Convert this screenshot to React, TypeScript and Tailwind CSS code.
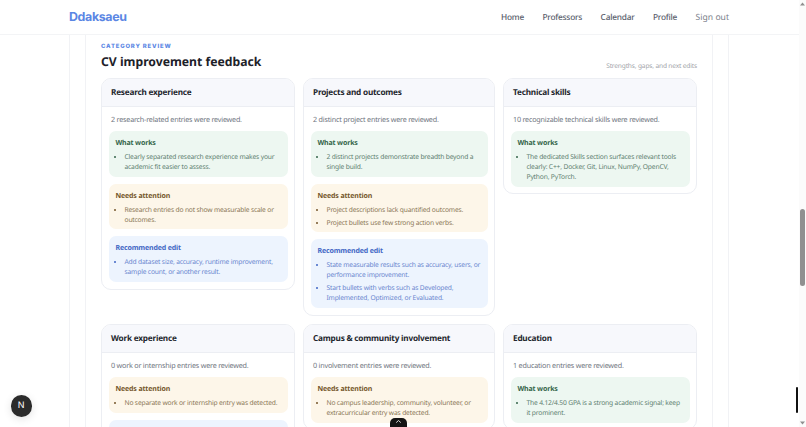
import React from "react";

type Kind = "good" | "warn" | "edit";
const styles: Record<Kind, { box: string; title: string; item: string; marker: string; label: string }> = {
  good: { box: "bg-[#edf7f1]", title: "text-[#35654a]", item: "text-[#5d8070]", marker: "marker:text-[#35654a]", label: "What works" },
  warn: { box: "bg-[#fdf6e9]", title: "text-[#74562b]", item: "text-[#8b7656]", marker: "marker:text-[#74562b]", label: "Needs attention" },
  edit: { box: "bg-[#edf4fe]", title: "text-[#3f66c4]", item: "text-[#6a86cf]", marker: "marker:text-[#3f66c4]", label: "Recommended edit" },
};

function Box({ kind, items }: { kind: Kind; items: string[] }) {
  const s = styles[kind];
  return (
    <div className={`rounded-[7px] pl-[7px] pr-[6px] pt-[7.85px] pb-[4.85px] ${s.box}`}>
      <div className={`text-[7px] leading-[10px] font-bold tracking-[-0.15px] ${s.title}`}>{s.label}</div>
      <ul className={`mt-[3px] flex list-disc flex-col gap-[3px] pl-[9px] text-[6.7px] leading-[10px] tracking-[-0.17px] ${s.item} ${s.marker}`}>
        {items.map((t) => (
          <li key={t}>{t}</li>
        ))}
      </ul>
    </div>
  );
}

function Card({ title, summary, children }: { title: string; summary: string; children: React.ReactNode }) {
  return (
    <div className="overflow-hidden rounded-[10px] border border-[#eceef3] bg-white">
      <div className="flex h-[28.5px] items-center border-b border-[#eceef3] bg-[#f7f8fc] px-[9px] pt-[2.5px]">
        <h3 className="text-[8.2px] font-bold tracking-[-0.2px] text-[#23262d]">{title}</h3>
      </div>
      <div className="px-[6.5px] pb-[6.5px]">
        <p className="px-[2.5px] pt-[7.8px] pb-[5.2px] text-[7.2px] leading-[11px] tracking-[-0.2px] text-[#6f7580]">{summary}</p>
        <div className="flex flex-col gap-[7px]">{children}</div>
      </div>
    </div>
  );
}

export default function App() {
  return (
    <div className="relative h-[427px] w-[806px] overflow-hidden bg-white font-['Noto_Sans',sans-serif] [text-rendering:geometricPrecision]">
      <header className="flex h-[34.5px] w-[799px] items-center border-b border-[#f3f4f6] pl-[69px] pr-[70px]">
        <div className="pt-[1.5px] font-['Inter',sans-serif] text-[12.4px] font-bold tracking-[-0.35px] text-[#5a86e4]">Ddaksaeu</div>
        <nav className="ml-auto flex items-center gap-[18.5px] pt-[2px] text-[8.3px] font-medium tracking-[-0.22px] text-[#59606c]">
          <a>Home</a>
          <a>Professors</a>
          <a>Calendar</a>
          <a>Profile</a>
          <a className="text-[8.6px] font-normal tracking-normal text-[#7b818b]">Sign out</a>
        </nav>
      </header>

      <main className="mx-[69px] w-[660px] border-x border-[#f1f2f5] px-[15px]">
        <div className="h-[392.5px] border-x border-[#f1f2f5] px-[15px] pt-[8.5px]">
          <section className="relative flex items-end justify-between">
            <div>
              <div className="font-['Inter',sans-serif] text-[5.9px] leading-[8px] font-extrabold tracking-[0.85px] text-[#5a86e4]">CATEGORY REVIEW</div>
              <h2 className="mt-[1px] text-[12.2px] leading-[19px] font-bold text-[#1d2129]">CV improvement feedback</h2>
            </div>
            <div className="mb-[0.5px] text-[6.6px] leading-[10px] tracking-[-0.16px] text-[#a0a3a8]">Strengths, gaps, and next edits</div>
          </section>

          <div className="mt-[6.5px] grid grid-cols-[194px_192px_194px] items-start gap-x-[8px] gap-y-[8px]">
            <Card title="Research experience" summary="2 research-related entries were reviewed.">
              <Box kind="good" items={["Clearly separated research experience makes your academic fit easier to assess."]} />
              <Box kind="warn" items={["Research entries do not show measurable scale or outcomes."]} />
              <Box kind="edit" items={["Add dataset size, accuracy, runtime improvement, sample count, or another result."]} />
            </Card>
            <Card title="Projects and outcomes" summary="2 distinct project entries were reviewed.">
              <Box kind="good" items={["2 distinct projects demonstrate breadth beyond a single build."]} />
              <Box kind="warn" items={["Project descriptions lack quantified outcomes.", "Project bullets use few strong action verbs."]} />
              <Box kind="edit" items={["State measurable results such as accuracy, users, or performance improvement.", "Start bullets with verbs such as Developed, Implemented, Optimized, or Evaluated."]} />
            </Card>
            <Card title="Technical skills" summary="10 recognizable technical skills were reviewed.">
              <Box kind="good" items={["The dedicated Skills section surfaces relevant tools clearly: C++, Docker, Git, Linux, NumPy, OpenCV, Python, PyTorch."]} />
            </Card>
            <Card title="Work experience" summary="0 work or internship entries were reviewed.">
              <Box kind="warn" items={["No separate work or internship entry was detected."]} />
              <Box kind="edit" items={["Add relevant internship or work experience."]} />
            </Card>
            <Card title="Campus & community involvement" summary="0 involvement entries were reviewed.">
              <Box kind="warn" items={["No campus leadership, community, volunteer, or extracurricular entry was detected."]} />
            </Card>
            <Card title="Education" summary="1 education entries were reviewed.">
              <Box kind="good" items={["The 4.12/4.50 GPA is a strong academic signal; keep it prominent."]} />
            </Card>
          </div>
        </div>
      </main>

      {/* Next.js dev badge */}
      <div className="absolute top-[395px] left-[10.5px] flex h-[21.5px] w-[21.5px] items-center justify-center rounded-full bg-[#2b2b2b] font-['Inter',sans-serif] text-[9px] text-white shadow-[0_2px_8px_rgba(0,0,0,0.12)]">
        N
      </div>

      {/* Collapsed handle at bottom */}
      <div className="absolute top-[418px] left-[390px] flex h-[9px] w-[17px] justify-center rounded-t-[5px] bg-[#141414]">
        <svg width="7" height="5" viewBox="0 0 7 5" className="mt-[1px]">
          <path d="M1.2 3.6 3.5 1.5 5.8 3.6" fill="none" stroke="#d8d8d8" strokeWidth="1" />
        </svg>
      </div>

      {/* Right edge tab */}
      <div className="absolute top-[387px] left-[795.5px] h-[26px] w-[2px] rounded-full bg-[#111]" />

      {/* Scrollbar */}
      <div className="absolute top-0 right-0 h-[427px] w-[7px] bg-[#fbfbfb]">
        <svg width="7" height="6" viewBox="0 0 7 6" className="absolute top-[1px] left-0">
          <path d="M3.5 1.5 6 4.5H1Z" fill="#8f8f8f" />
        </svg>
        <div className="absolute top-[209px] left-[1px] h-[77px] w-[5px] rounded-full bg-[#909090]" />
        <svg width="7" height="6" viewBox="0 0 7 6" className="absolute bottom-[1px] left-0">
          <path d="M3.5 4.5 6 1.5H1Z" fill="#8f8f8f" />
        </svg>
      </div>
    </div>
  );
}
